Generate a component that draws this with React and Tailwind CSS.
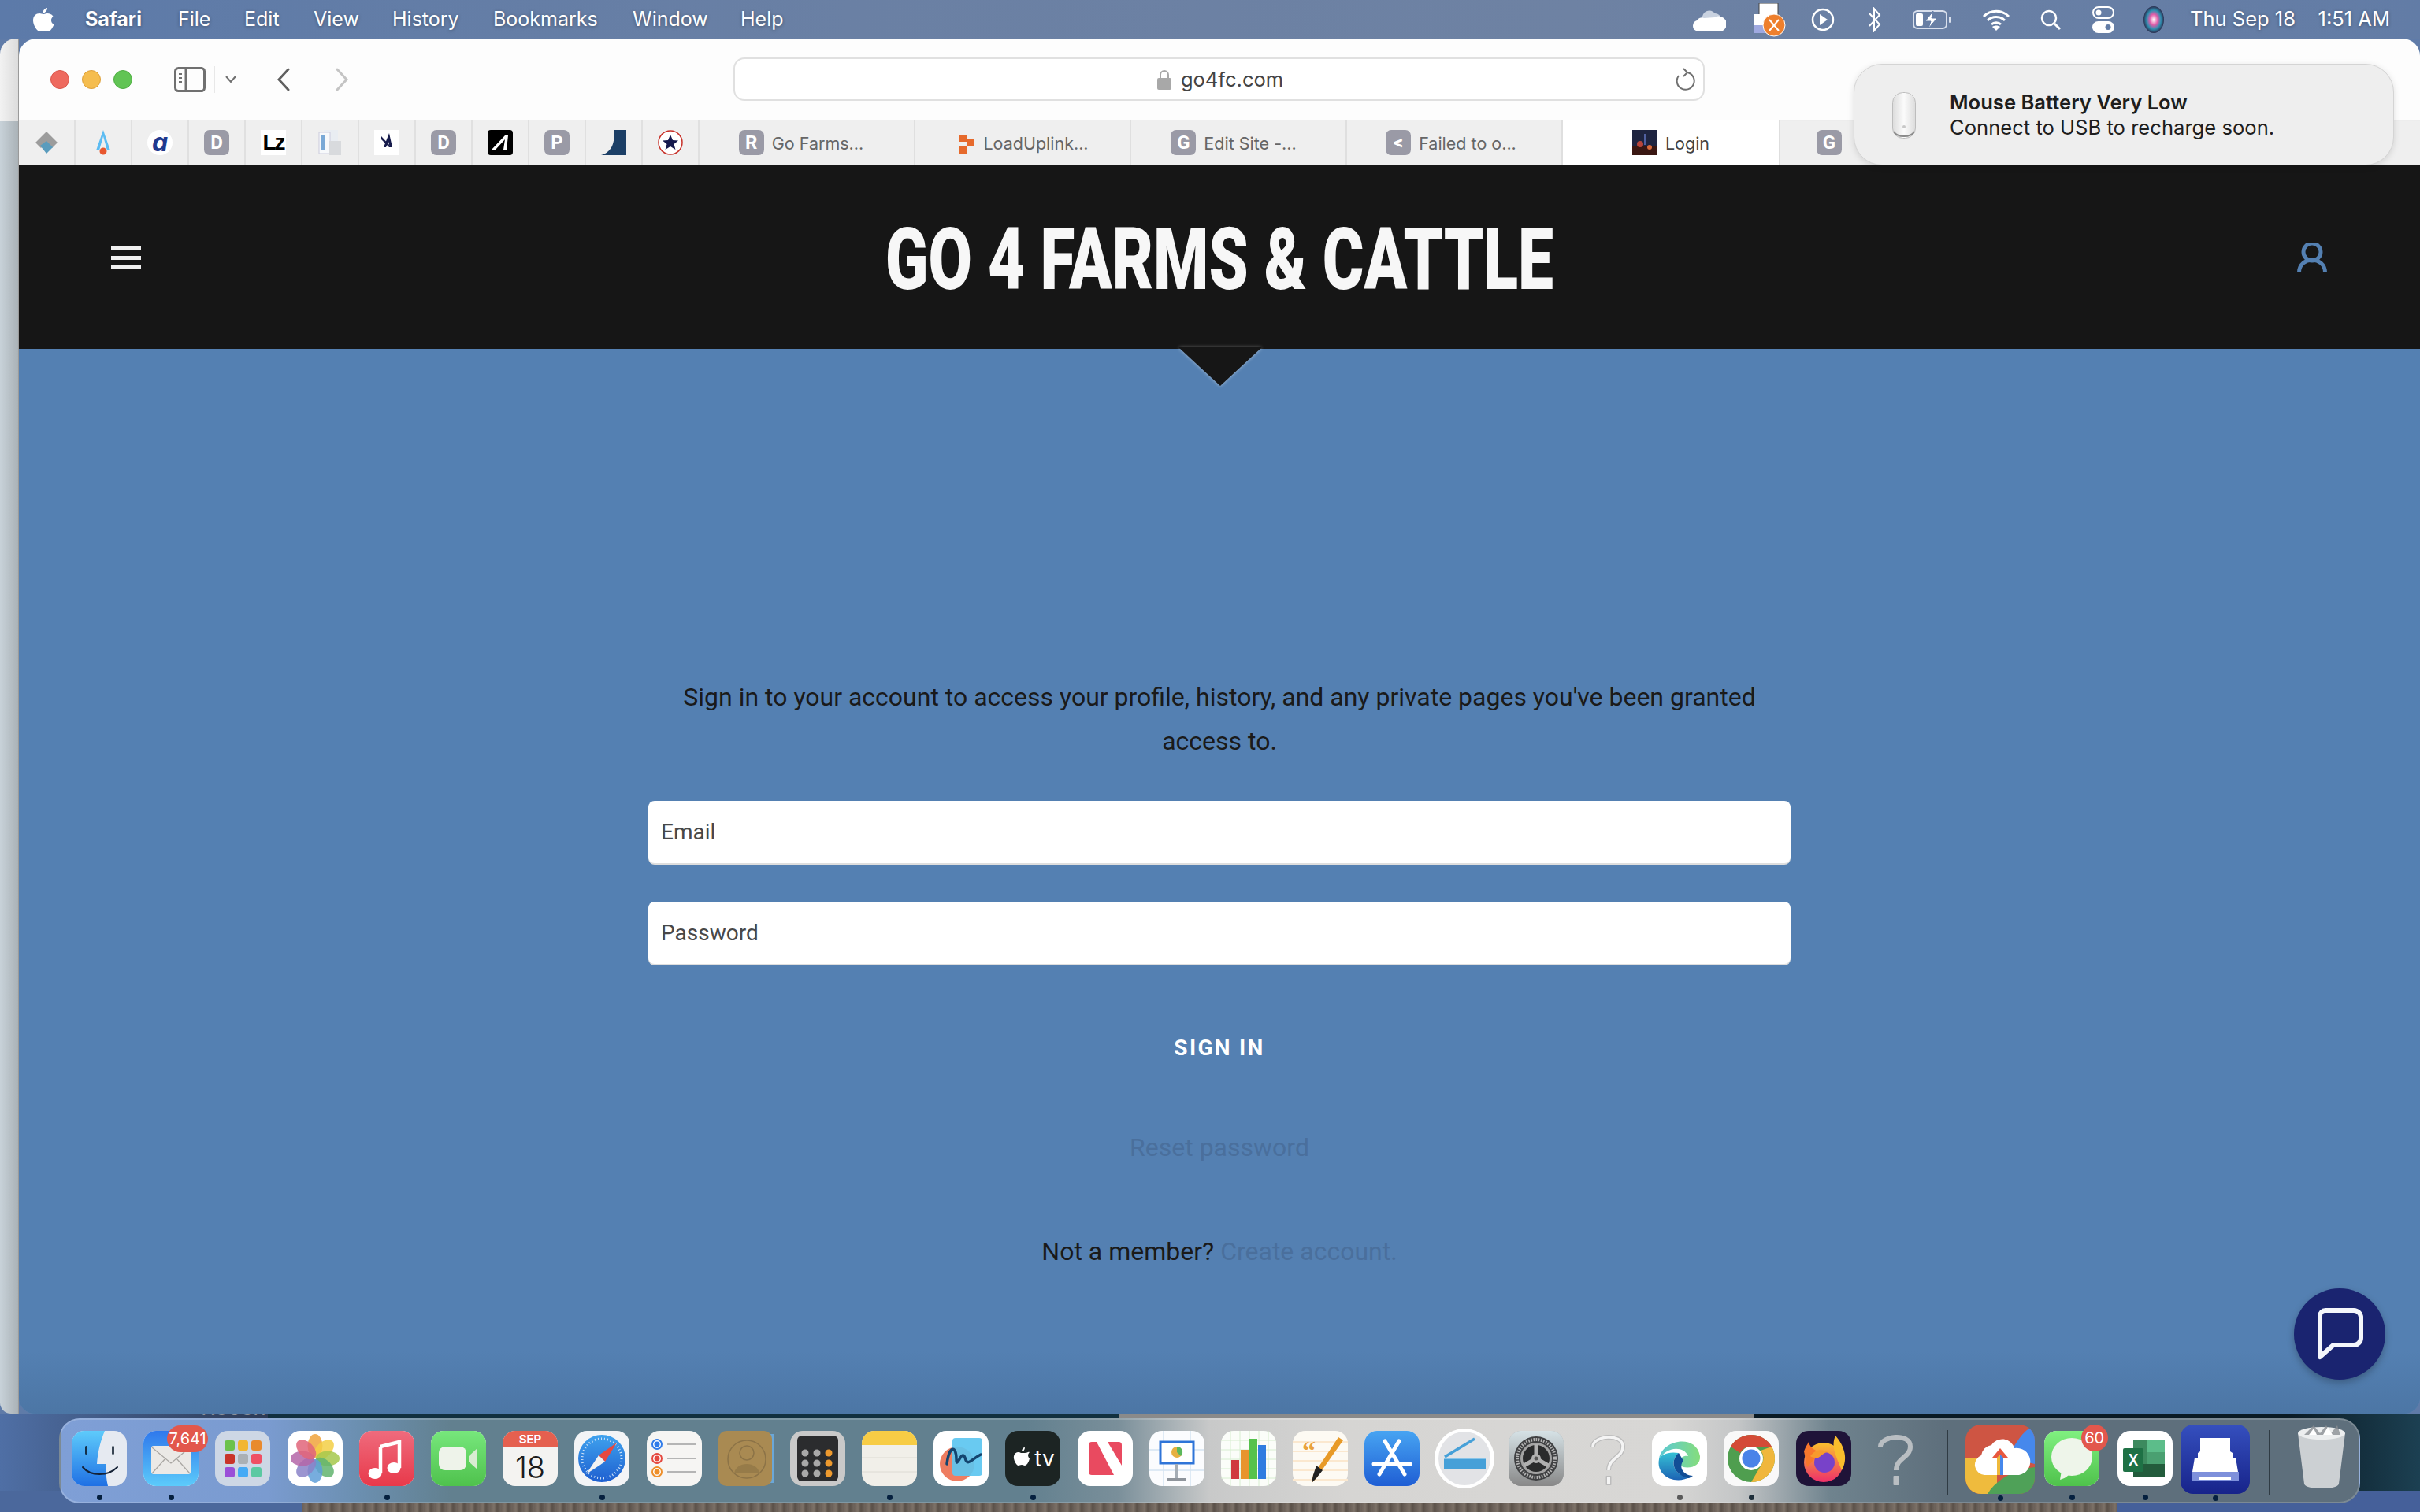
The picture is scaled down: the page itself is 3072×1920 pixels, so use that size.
import React from "react";

const SF = "font-['Inter','Liberation_Sans',sans-serif]";
const RB = "font-['Roboto','Liberation_Sans',sans-serif]";

const Sq = ({ children, fill = "#fff", w = 70, h = 70, rx = 16 }) => (
  <svg width={w} height={h} viewBox={`0 0 ${w} ${h}`} className="block">
    <rect width={w} height={h} rx={rx} fill={fill} />
    {children}
  </svg>
);

const Grad = ({ id, a, b, x2 = 0, y2 = 1 }) => (
  <defs>
    <linearGradient id={id} x1="0" y1="0" x2={x2} y2={y2}>
      <stop offset="0" stopColor={a} />
      <stop offset="1" stopColor={b} />
    </linearGradient>
  </defs>
);

const Finder = () => (
  <Sq fill="#e6eaf1">
    <Grad id="fi" a="#5ecbfb" b="#1f70e4" />
    <path d="M16 0H42C36 14 33 28 32 42H43C43 52 44 62 46 70H16A16 16 0 0 1 0 54V16A16 16 0 0 1 16 0Z" fill="url(#fi)" />
    <rect x="17" y="19" width="3" height="11" rx="1.5" fill="#153049" />
    <rect x="51" y="19" width="3" height="11" rx="1.5" fill="#3a4654" />
    <path d="M14 46C24 58 46 58 58 46" fill="none" stroke="#152236" strokeWidth="2" strokeLinecap="round" />
  </Sq>
);
const Mail = () => (
  <Sq>
    <Grad id="ma" a="#2f78ec" b="#5ccbfb" />
    <rect width="70" height="70" rx="16" fill="url(#ma)" />
    <rect x="10" y="19" width="50" height="36" rx="3" fill="#ebe9e6" />
    <path d="M11 21L35 41L59 21M11 54L28 35M59 54L42 35" fill="none" stroke="#a9a6a2" strokeWidth="1.2" />
  </Sq>
);
const Launch = () => {
  const c = ["#6cc24a", "#f2b632", "#e98a2c", "#c9342a", "#aab0b5", "#ef4f63", "#9a4fd8", "#45aaf5", "#5bc9a2"];
  return (
    <Sq fill="#cdd7e5">
      {c.map((f, i) => (
        <rect key={i} x={12 + (i % 3) * 17} y={12 + Math.floor(i / 3) * 17} width="13" height="13" rx="3" fill={f} />
      ))}
    </Sq>
  );
};
const Photos = () => {
  const c = ["#f0a33c", "#f3cf45", "#a6c84c", "#62b46f", "#5f9fd8", "#8a82c8", "#b466a8", "#e0657a"];
  return (
    <Sq>
      {c.map((f, i) => (
        <ellipse key={i} cx="35" cy="19" rx="9.5" ry="15" fill={f} opacity=".85" transform={`rotate(${i * 45} 35 35)`} />
      ))}
    </Sq>
  );
};
const Music = () => (
  <Sq>
    <Grad id="mu" a="#ef6b7d" b="#e8394a" />
    <rect width="70" height="70" rx="16" fill="url(#mu)" />
    <path d="M27 20L51 14V47" fill="none" stroke="#fff" strokeWidth="4.5" />
    <path d="M27 20V54" fill="none" stroke="#fff" strokeWidth="4.5" />
    <ellipse cx="20" cy="54" rx="8.5" ry="7" fill="#fff" />
    <ellipse cx="44" cy="47" rx="8.5" ry="7" fill="#fff" />
  </Sq>
);
const Facetime = () => (
  <Sq>
    <Grad id="ft" a="#77e77c" b="#4fc24d" />
    <rect width="70" height="70" rx="16" fill="url(#ft)" />
    <rect x="10" y="20" width="35" height="30" rx="8" fill="#eef3ea" />
    <path d="M48 32L59 22V49L48 39Z" fill="#d9ecd2" />
  </Sq>
);
const Calendar = () => (
  <svg width="70" height="70" viewBox="0 0 70 70" className="block">
    <rect width="70" height="70" rx="16" fill="#f4f3f1" />
    <path d="M16 0H54A16 16 0 0 1 70 16V21H0V16A16 16 0 0 1 16 0Z" fill="#e5604f" />
    <text x="35" y="16" textAnchor="middle" fontSize="15" fontWeight="700" fill="#fff" fontFamily="Inter">SEP</text>
    <text x="35" y="60" textAnchor="middle" fontSize="38" fontWeight="300" fill="#1c1c1c" fontFamily="Inter">18</text>
  </svg>
);
const Safari = () => (
  <Sq fill="#f3f4f6">
    <Grad id="sf" a="#3fa2ee" b="#1e5fd0" />
    <circle cx="35" cy="35" r="30" fill="url(#sf)" />
    <circle cx="35" cy="35" r="25" fill="none" stroke="#cfe3f8" strokeWidth="3" strokeDasharray="1 3" />
    <path d="M54 15L31 31L39 39Z" fill="#e8483e" />
    <path d="M15 55L31 31L39 39Z" fill="#f2f2f2" />
  </Sq>
);
const Reminders = () => (
  <Sq fill="#f6f5f3">
    {[["#2f7bea", 17], ["#e4483f", 35], ["#ee8f2a", 52]].map(([c, y]) => (
      <g key={y}>
        <circle cx="13" cy={y} r="6" fill="#fff" stroke={c} strokeWidth="2" />
        <circle cx="13" cy={y} r="3.5" fill={c} />
        <rect x="26" y={y - 1} width="36" height="2" fill="#b5b5b5" />
      </g>
    ))}
  </Sq>
);
const Contacts = () => (
  <svg width="70" height="70" viewBox="0 0 70 70" className="block">
    <rect x="60" y="4" width="10" height="62" fill="#6aa7d8" />
    <rect width="68" height="70" rx="10" fill="#a98a52" />
    <circle cx="36" cy="36" r="24" fill="none" stroke="#8c7347" strokeWidth="1.5" />
    <circle cx="36" cy="28" r="9" fill="none" stroke="#8c7347" strokeWidth="1.5" />
    <path d="M20 54C22 38 50 38 52 54" fill="#967b49" />
  </svg>
);
const Calc = () => (
  <Sq fill="#c9c9c9">
    <rect x="9" y="6" width="52" height="58" rx="6" fill="#2b2c2e" />
    {[0, 1, 2].map((r) =>
      [0, 1, 2].map((c) => (
        <circle key={`${r}${c}`} cx={19 + c * 15} cy={28 + r * 13} r="4.5" fill={c === 2 ? "#ee9a2e" : "#a9a9a9"} />
      ))
    )}
  </Sq>
);
const Notes = () => (
  <svg width="70" height="70" viewBox="0 0 70 70" className="block">
    <rect width="70" height="70" rx="16" fill="#f1efe9" />
    <path d="M16 0H54A16 16 0 0 1 70 16V18H0V16A16 16 0 0 1 16 0Z" fill="#f7cc45" />
    <path d="M0 34H70M0 52H70" stroke="#dcdad3" strokeWidth="1" />
  </svg>
);
const Freeform = () => (
  <Sq>
    <circle cx="30" cy="42" r="22" fill="#ee7d61" />
    <rect x="24" y="9" width="38" height="48" rx="4" fill="#5cc5f0" opacity=".92" />
    <path d="M17 42C20 18 29 18 29 36C29 50 36 22 40 34C43 46 48 36 60 30" fill="none" stroke="#14456f" strokeWidth="3.5" strokeLinecap="round" />
  </Sq>
);
const AppleTv = () => (
  <svg width="70" height="70" viewBox="0 0 70 70" className="block">
    <rect width="70" height="70" rx="16" fill="#1c2423" />
    <path d="M25 26C28 26 29 24 31 25C29 27 28 30 31 33C30 38 27 42 25 42C23 42 23 41 21 41C19 41 18 42 17 42C14 42 10 34 11 30C12 25 17 24 20 26C22 26 23 26 25 26ZM25 19C25 22 23 24 21 24C21 21 23 19 25 19Z" fill="#fff" transform="translate(0 2)" />
    <text x="50" y="45" textAnchor="middle" fontSize="28" fontWeight="400" fill="#fff" fontFamily="Inter">tv</text>
  </svg>
);
const News = () => (
  <Sq>
    <rect x="14" y="14" width="42" height="42" rx="4" fill="#e94a60" />
    <path d="M24 14H38L56 44V56H46Z" fill="#fff" />
  </Sq>
);
const Keynote = () => (
  <Sq fill="#fbfcfe">
    <path d="M0 24H70M0 50H70M18 0V70M52 0V70" stroke="#d5e3f2" strokeWidth="1.5" />
    <rect x="14" y="14" width="42" height="27" fill="#fff" stroke="#2e74d8" strokeWidth="3" />
    <circle cx="35" cy="27" r="7" fill="#e6b040" />
    <path d="M35 27V20A7 7 0 0 1 40 32Z" fill="#5cb85c" />
    <rect x="33" y="42" width="4" height="18" fill="#a5adb5" />
    <rect x="23" y="60" width="24" height="4" fill="#8f959c" />
  </Sq>
);
const Numbers = () => (
  <Sq fill="#fbfdf9">
    <path d="M0 12H70M0 24H70M0 36H70M0 48H70M0 60H70M12 0V70M24 0V70M36 0V70M48 0V70M60 0V70" stroke="#d7eed0" strokeWidth="1" />
    <rect x="13" y="37" width="10" height="24" fill="#d03a3e" />
    <rect x="25" y="24" width="10" height="37" fill="#e8942d" />
    <rect x="36" y="10" width="10" height="51" fill="#56c24d" />
    <rect x="47" y="18" width="10" height="43" fill="#2f7de0" />
  </Sq>
);
const Pages = () => (
  <Sq fill="#fdfaf3">
    <path d="M0 14H70M0 26H70M0 38H70M0 50H70M0 62H70" stroke="#fbe8cf" strokeWidth="2" />
    <text x="12" y="36" fontSize="34" fontWeight="700" fill="#e9a23d" fontFamily="Liberation Serif">“</text>
    <path d="M58 8L64 12L30 60L24 66L26 56Z" fill="#e89a27" />
    <path d="M30 44L38 50L30 60L24 66L26 56Z" fill="#222" />
  </Sq>
);
const AppStore = () => (
  <Sq>
    <Grad id="as" a="#47a4f2" b="#1f5ed4" />
    <rect width="70" height="70" rx="16" fill="url(#as)" />
    <path d="M26 13L51 55M44 13L19 55" stroke="#fff" strokeWidth="5" strokeLinecap="round" />
    <path d="M12 42H58" stroke="#fff" strokeWidth="5" strokeLinecap="round" />
  </Sq>
);
const Capture = () => (
  <svg width="78" height="78" viewBox="0 0 78 78" className="block">
    <ellipse cx="39" cy="39" rx="38" ry="38" fill="#fff" />
    <ellipse cx="39" cy="39" rx="33" ry="34" fill="#e2e3e6" />
    <path d="M14 37L52 14" stroke="#46a0d8" strokeWidth="3.5" />
    <rect x="13" y="38" width="53" height="14" fill="#46a0d8" />
    <rect x="13" y="38" width="53" height="2" fill="#88c4e8" />
  </svg>
);
const Settings = () => (
  <Sq fill="#a5abae">
    <Grad id="st" a="#d6e2e6" b="#888" />
    <rect width="70" height="70" rx="16" fill="url(#st)" />
    <circle cx="35" cy="35" r="28" fill="#3f4042" />
    <circle cx="35" cy="35" r="24" fill="none" stroke="#b4b4b4" strokeWidth="4" strokeDasharray="1.6 1.6" />
    <circle cx="35" cy="35" r="20" fill="#a3a3a3" />
    <circle cx="35" cy="35" r="17" fill="#2a2b2c" />
    <path d="M35 35V17M35 35L19.5 44M35 35L50.5 44" stroke="#b0b0b0" strokeWidth="5" />
    <circle cx="35" cy="35" r="6" fill="#b0b0b0" />
    <circle cx="35" cy="35" r="2.5" fill="#555" />
  </Sq>
);
const Question = ({ color = "#b9bec2", inner }) => (
  <svg width="70" height="70" viewBox="0 0 70 70" className="block">
    <path d="M16 20C16 6 54 2 54 20C54 34 36 34 36 50" fill="none" stroke={color} strokeWidth="6" />
    <rect x="32.5" y="57" width="7" height="12" rx="1" fill={color} />
    {inner && <path d="M16 20C16 6 54 2 54 20C54 34 36 34 36 50" fill="none" stroke={inner} strokeWidth="3.5" />}
    {inner && <rect x="34" y="58.5" width="4" height="9" fill={inner} />}
  </svg>
);
const Edge = () => (
  <Sq>
    <Grad id="ed" a="#36c1d5" b="#1c63b4" />
    <Grad id="eg" a="#5bc9d6" b="#85dd7c" x2={1} y2={0} />
    <path d="M9 38C9 12 56 2 61 32C62 44 50 48 40 46C30 42 36 30 46 32C40 18 16 20 9 38Z" fill="url(#eg)" />
    <path d="M9 36C5 56 28 70 50 58C30 60 20 40 34 28C20 26 12 30 9 36Z" fill="url(#ed)" />
    <path d="M34 28C24 36 24 54 46 60C48 60 50 58 52 57C38 56 34 44 40 38Z" fill="#124e96" />
  </Sq>
);
const Chrome = () => (
  <Sq fill="#f9f9f9">
    <circle cx="35" cy="35" r="30" fill="#4f9e4f" />
    <path d="M35 5A30 30 0 0 1 61 20H35A15 15 0 0 0 21 28L9 20A30 30 0 0 1 35 5Z" fill="#d44b37" />
    <path d="M61 20A30 30 0 0 1 35 65L48 43A15 15 0 0 0 47 25Z" fill="#f0b73c" />
    <circle cx="35" cy="35" r="15" fill="#fff" />
    <circle cx="35" cy="35" r="11.5" fill="#4a83e8" />
  </Sq>
);
const Firefox = () => (
  <Sq fill="#1f1338">
    <Grad id="ff" a="#fbc02d" b="#ee2f6a" />
    <circle cx="35" cy="40" r="25" fill="url(#ff)" />
    <path d="M50 6C62 20 66 36 58 50C50 30 44 20 50 6Z" fill="#f9bd2c" />
    <path d="M10 26C12 20 14 18 16 14C18 24 26 24 30 28L14 46Z" fill="#f8772c" />
    <circle cx="36" cy="40" r="13" fill="#7842c9" />
    <path d="M18 32C24 24 32 22 40 27C34 28 32 32 28 34C24 34 20 34 18 32Z" fill="#f89a2c" />
  </Sq>
);
const GDrive = () => (
  <svg width="88" height="88" viewBox="0 0 88 88" className="block">
    <clipPath id="gd"><rect width="88" height="88" rx="20" /></clipPath>
    <g clipPath="url(#gd)">
      <rect width="88" height="88" fill="#ce5543" />
      <path d="M88 0V50L54 42C62 26 72 8 88 0Z" fill="#4688ec" />
      <path d="M0 42H40V88H0Z" fill="#efbb3d" />
      <path d="M28 88C40 68 66 56 88 54V88Z" fill="#4fa158" />
    </g>
    <path d="M24 64A13 13 0 0 1 20 39A15 15 0 0 1 33 26A16 16 0 0 1 62 30A17 17 0 0 1 68 64Z" fill="#fff" />
    <path d="M44 30L34 42H40V64H48V42H54Z" fill="#e8583f" />
    <path d="M40 42V64H44V38Z" fill="#efb93b" />
    <path d="M48 42V64H44V38Z" fill="#4688ec" />
  </svg>
);
const Messages = () => (
  <Sq>
    <Grad id="ms" a="#80f080" b="#4fc24c" />
    <rect width="70" height="70" rx="16" fill="url(#ms)" />
    <ellipse cx="35" cy="33" rx="26" ry="24" fill="#eef5ea" />
    <path d="M22 50L20 62C26 60 30 58 32 54Z" fill="#eef5ea" />
  </Sq>
);
const Excel = () => (
  <Sq>
    <rect x="20" y="12" width="40" height="46" fill="#3c8a5e" />
    <rect x="38" y="12" width="22" height="15" fill="#5cbd8a" />
    <rect x="38" y="27" width="22" height="15" fill="#4aa071" />
    <rect x="20" y="42" width="40" height="16" fill="#235c3c" />
    <rect x="7" y="22" width="26" height="30" rx="2" fill="#1e7145" />
    <text x="20" y="44" textAnchor="middle" fontSize="20" fontWeight="500" fill="#fff" fontFamily="Roboto">X</text>
  </Sq>
);
const Scanner = () => (
  <svg width="88" height="88" viewBox="0 0 88 88" className="block">
    <Grad id="sc" a="#354fbe" b="#17238a" />
    <rect width="88" height="88" rx="16" fill="url(#sc)" />
    <path d="M25 17H63V42H25Z" fill="#fff" />
    <path d="M18 42H22V36L25 34V42H63V34L66 36V42H70L74 66H14Z" fill="#fff" />
    <path d="M14 60H74V71H14Z" fill="#7e90db" />
    <rect x="24" y="66" width="40" height="4" fill="#fff" />
  </svg>
);
const Trash = () => (
  <svg width="64" height="82" viewBox="0 0 64 82" className="block">
    <path d="M2 12H62L54 76C53 80 45 82 32 82C19 82 11 80 10 76Z" fill="#d6d8da" opacity=".92" />
    <ellipse cx="32" cy="12" rx="30" ry="8" fill="#eceeef" />
    <path d="M10 14L22 2L30 12L38 2L44 12L52 2L56 14Z" fill="#8b8f94" opacity=".8" />
    <path d="M22 6L26 14H16ZM40 4L46 14H34Z" fill="#fff" />
  </svg>
);

const Dot = ({ color = "bg-[#05203f]", className = "-bottom-[18px]" }) => (
  <span className={`absolute left-1/2 -ml-[3px] w-[7px] h-[7px] rounded-full ${color} ${className}`} />
);

const Item = ({ children, dot, color, className = "", dotClass }) => (
  <div className={`relative shrink-0 ${className}`}>
    {children}
    {dot && <Dot color={color} className={dotClass} />}
  </div>
);

const Badge = ({ children, className }) => (
  <span className={`absolute flex items-center justify-center rounded-full bg-[#e2574c] text-white ${SF} text-[20px] leading-none ${className}`}>{children}</span>
);

const Dock = () => (
  <div className="absolute left-[75px] top-[1801px] w-[2921px] h-[108px] rounded-[26px] border-2 border-[#ffffff30] bg-[linear-gradient(to_right,#7f9fd6_0%,#7a9bd0_9%,#6b8fb0_13%,#62808f_17%,#62808f_42%,#7a8f9a_46%,#c8c9c9_50%,#d6d5d3_56%,#d8d7d5_70%,#c4c6c7_73%,#6f838e_77%,#5e6f7c_82%,#5e6f7c_100%)] flex items-start pt-[14px] pl-[14px]">
    <div className="flex items-start gap-[21.2px]">
      <Item dot><Finder /></Item>
      <Item dot>
        <Mail />
        <Badge className="-top-[7px] left-[30px] w-[52px] h-[34px]">7,641</Badge>
      </Item>
      <Item><Launch /></Item>
      <Item><Photos /></Item>
      <Item dot><Music /></Item>
      <Item><Facetime /></Item>
      <Item><Calendar /></Item>
      <Item dot><Safari /></Item>
      <Item><Reminders /></Item>
      <Item><Contacts /></Item>
      <Item><Calc /></Item>
      <Item dot><Notes /></Item>
      <Item><Freeform /></Item>
      <Item dot><AppleTv /></Item>
      <Item><News /></Item>
      <Item><Keynote /></Item>
      <Item><Numbers /></Item>
      <Item><Pages /></Item>
      <Item><AppStore /></Item>
      <Item className="w-[70px] -mt-[4px] flex justify-center"><div className="shrink-0"><Capture /></div></Item>
      <Item><Settings /></Item>
      <Item><Question color="#bdbdbd" inner="#f4f4f4" /></Item>
      <Item dot color="bg-[#5a5a5a]"><Edge /></Item>
      <Item dot color="bg-[#1d2e3a]"><Chrome /></Item>
      <Item><Firefox /></Item>
      <Item><Question /></Item>
    </div>
    <div className="w-[1px] h-[82px] -mt-[1px] ml-[31px] bg-[#2f3b44]" />
    <Item dot className="ml-[22px] -mt-[8px]" dotClass="-bottom-[9px]"><GDrive /></Item>
    <Item dot className="ml-[12px]"><Messages /><Badge className="-top-[8px] left-[47px] w-[34px] h-[34px]">60</Badge></Item>
    <Item dot className="ml-[23px]"><Excel /></Item>
    <Item dot className="ml-[10px] -mt-[8px]" dotClass="-bottom-[9px]"><Scanner /></Item>
    <div className="w-[1px] h-[82px] -mt-[1px] ml-[24px] bg-[#2f3b44]" />
    <Item className="ml-[34px] -mt-[9px]"><Trash /></Item>
  </div>
);

const MenuBar = () => {
  const menus = [["File", "w-[84px]"], ["Edit", "w-[88px]"], ["View", "w-[100px]"], ["History", "w-[128px]"], ["Bookmarks", "w-[177px]"], ["Window", "w-[137px]"], ["Help", ""]];
  return (
    <div className={`h-[49px] shrink-0 flex items-center text-white ${SF} text-[25px] bg-[linear-gradient(to_right,#5c7aa9,#6a80a4_35%,#6e82a3_65%,#627ca6)] [text-shadow:0_1px_4px_rgba(0,0,0,.35)]`}>
      <svg width="28" height="32" viewBox="0 0 28 32" className="ml-[41px] shrink-0" fill="#fff">
        <path d="M19 8C22 8 25 9 26.5 12C23 14 23 20 27.5 22C26 26 23 31 20 31C18 31 17 30 15 30C13 30 12 31 10 31C6 31 1 23 1 17C1 11 5 8 9 8C11 8 13 9 14.5 9C16 9 17 8 19 8ZM19 1C19 4.5 16.5 7.5 13.5 7.5C13.2 4.5 16 1.5 19 1Z" />
      </svg>
      <span className="ml-[39px] w-[118px] font-bold">Safari</span>
      {menus.map(([m, w]) => (
        <span key={m} className={w}>{m}</span>
      ))}
      <div className="ml-auto flex items-center h-full">
        <div className="w-[80px] flex justify-center">
          <svg width="42" height="30" viewBox="0 0 42 30"><path d="M12 14A9 9 0 0 1 28 7A8 8 0 0 1 36 14L20 22Z" fill="#c9d2e0" /><path d="M4 29A7 7 0 0 1 5 16A7 7 0 0 1 14 13L28 12A8 8 0 0 1 38 29Z" fill="#fff" /></svg>
        </div>
        <div className="w-[74px] flex justify-center">
          <svg width="42" height="44" viewBox="0 0 42 44" className="mt-[2px]">
            <rect x="7" y="0" width="24" height="16" fill="#fff" stroke="#444" />
            <rect x="0" y="14" width="30" height="24" fill="#fff" />
            <rect x="0" y="28" width="24" height="10" fill="#9fa9e0" />
            <circle cx="26" cy="28" r="14" fill="#ee7f2c" stroke="#fff" strokeWidth="1" />
            <path d="M20 21L32 35M32 21L20 35" stroke="#fff" strokeWidth="2" />
          </svg>
        </div>
        <div className="w-[60px] flex justify-center">
          <svg width="30" height="30" viewBox="0 0 30 30"><circle cx="15" cy="15" r="13" fill="none" stroke="#fff" strokeWidth="2.5" /><path d="M11 8L21 15L11 22Z" fill="#fff" /></svg>
        </div>
        <div className="w-[72px] flex justify-center">
          <svg width="18" height="32" viewBox="0 0 18 32"><path d="M2 8L15 22L8 30V2L15 10L2 24" fill="none" stroke="#fff" strokeWidth="2" /></svg>
        </div>
        <div className="w-[74px] flex justify-center">
          <svg width="50" height="24" viewBox="0 0 50 24"><rect x="1" y="1" width="42" height="22" rx="5" fill="none" stroke="#d8dfec" strokeWidth="2" /><rect x="46" y="8" width="3" height="8" rx="1" fill="#d8dfec" /><rect x="4" y="4" width="9" height="16" rx="2" fill="#fff" /><path d="M26 1L16 14H23L20 23L31 10H24Z" fill="#fff" stroke="#627ca6" strokeWidth="1" /></svg>
        </div>
        <div className="w-[88px] flex justify-center">
          <svg width="36" height="28" viewBox="0 0 36 28"><path d="M2 10C11 1 25 1 34 10M7 15C13 9 23 9 29 15M12 20C15 17 21 17 24 20" fill="none" stroke="#fff" strokeWidth="3" /><path d="M18 28L13 23C16 21 20 21 23 23Z" fill="#fff" /></svg>
        </div>
        <div className="w-[50px] flex justify-center">
          <svg width="28" height="28" viewBox="0 0 28 28"><circle cx="12" cy="12" r="9" fill="none" stroke="#fff" strokeWidth="2.5" /><path d="M19 19L26 26" stroke="#fff" strokeWidth="3" /></svg>
        </div>
        <div className="w-[84px] flex justify-center">
          <svg width="28" height="34" viewBox="0 0 28 34"><rect x="1" y="1" width="26" height="14" rx="7" fill="none" stroke="#fff" strokeWidth="2" /><circle cx="8" cy="8" r="3.5" fill="#fff" /><rect y="19" width="28" height="15" rx="7.5" fill="#fff" /><circle cx="20" cy="26.5" r="3.5" fill="#627ca6" /></svg>
        </div>
        <div className="w-[44px] flex justify-center">
          <svg width="28" height="36" viewBox="0 0 28 36"><defs><radialGradient id="si"><stop offset="0" stopColor="#fff" /><stop offset=".4" stopColor="#e05ca8" /><stop offset=".7" stopColor="#2d8fb0" /><stop offset="1" stopColor="#2b2f50" /></radialGradient></defs><ellipse cx="14" cy="18" rx="13" ry="17" fill="url(#si)" /></svg>
        </div>
        <div className="w-[316px] shrink-0 pl-[24px] pr-[38px] flex justify-between text-[25.5px]">
          <span>Thu Sep 18</span>
          <span>1:51 AM</span>
        </div>
      </div>
    </div>
  );
};

const Letter = ({ children }) => (
  <span className={`w-[32px] h-[32px] shrink-0 rounded-[7px] bg-[#9a9aa6] text-white text-[24px] font-bold flex items-center justify-center ${RB}`}>{children}</span>
);

const favs = [
  <svg width="32" height="32" viewBox="0 0 32 32"><path d="M16 2L30 16L23 23L16 16L9 23L2 16Z" fill="#9c9c9c" /><path d="M8 20L16 14L24 22L16 30Z" fill="#5a9cbd" /></svg>,
  <svg width="32" height="32" viewBox="0 0 32 32"><path d="M16 0L25 26H21L16 8L11 26H7Z" fill="#5cbcf2" /><circle cx="16" cy="27" r="4.5" fill="#e8572e" /></svg>,
  <span className="w-[32px] h-[32px] rounded-full bg-white text-[#1f3a8f] text-[32px] font-bold italic flex items-center justify-center leading-none font-['Inter',sans-serif]">a</span>,
  <Letter>D</Letter>,
  <span className="w-[32px] h-[32px] bg-white text-black text-[28px] font-bold flex items-center justify-center leading-none font-['Liberation_Sans',sans-serif] tracking-[-2px]">Lz</span>,
  <svg width="32" height="32" viewBox="0 0 32 32"><rect x="8" y="0" width="18" height="24" fill="#e9edf2" /><rect x="2" y="3" width="14" height="27" fill="#f7f9fb" stroke="#ccd" /><rect x="4" y="6" width="6" height="20" fill="#7aa9d6" /><rect x="15" y="14" width="15" height="18" fill="#d8dadd" /></svg>,
  <svg width="32" height="32" viewBox="0 0 32 32"><rect width="32" height="32" fill="#fff" /><path d="M19 4L12 22H15L18 15L20 22H23Z" fill="#171c4c" /><path d="M9 8L22 22H19L9 12Z" fill="#171c4c" /></svg>,
  <Letter>D</Letter>,
  <svg width="32" height="32" viewBox="0 0 32 32"><rect width="32" height="32" rx="4" fill="#000" /><path d="M5 25L22 7H26L24 25H20L22 12L10 25Z" fill="#fff" /></svg>,
  <Letter>P</Letter>,
  <svg width="32" height="32" viewBox="0 0 32 32"><path d="M0 32C14 28 18 16 16 0H32V32Z" fill="#1c3f66" /></svg>,
  <svg width="32" height="32" viewBox="0 0 32 32"><circle cx="16" cy="16" r="15" fill="#fff" stroke="#c8322a" strokeWidth="1.5" /><path d="M16 6L19 13L26 13.5L20.5 18L22.5 25L16 21L9.5 25L11.5 18L6 13.5L13 13Z" fill="#14194d" /></svg>,
];

const Tab = ({ icon, label, active, className = "" }) => (
  <div className={`w-[274px] shrink-0 flex items-center justify-center gap-[10px] text-[21.5px] ${SF} ${active ? "bg-white text-[#444]" : "bg-[#efefef] text-[#666] border-r-2 border-[#dfdfdf]"} ${className}`}>
    {icon}
    <span className="mt-[3px]">{label}</span>
  </div>
);

const TabBar = () => (
  <div className="h-[56px] shrink-0 flex bg-white shadow-[inset_0_1px_2px_rgba(0,0,0,.15)]">
    {favs.map((f, i) => (
      <div key={i} className="w-[72px] shrink-0 flex items-center justify-center bg-[#efefef] border-r-2 border-[#e0e0e0]">{f}</div>
    ))}
    <Tab icon={<Letter>R</Letter>} label="Go Farms..." className="pr-[14px]" />
    <Tab
      icon={<svg width="20" height="32" viewBox="0 0 20 32"><rect x="0" y="6" width="9" height="9" fill="#e66a2c" /><rect x="9" y="12" width="9" height="9" fill="#e66a2c" /><rect x="0" y="21" width="9" height="9" fill="#e66a2c" /></svg>}
      label="LoadUplink..."
      className="pl-[4px]"
    />
    <Tab icon={<Letter>G</Letter>} label="Edit Site -..." className="pr-[12px]" />
    <Tab icon={<Letter>&lt;</Letter>} label="Failed to o..." className="pr-[8px]" />
    <Tab
      active
      icon={<svg width="32" height="32" viewBox="0 0 32 32"><rect width="32" height="32" fill="#1e2440" /><rect y="20" width="32" height="12" fill="#3a1712" /><circle cx="10" cy="18" r="4" fill="#b8453a" /><circle cx="22" cy="22" r="3" fill="#d8693a" /><rect x="15" y="5" width="2" height="14" fill="#5060a0" /></svg>}
      label="Login"
    />
    <div className={`flex-1 flex items-center pl-[48px] gap-[12px] bg-[#efefef] shadow-[inset_1px_0_1px_rgba(0,0,0,.08)] text-[22px] ${SF} text-[#666]`}>
      <Letter>G</Letter>
    </div>
  </div>
);

const Toolbar = () => (
  <div className="h-[104px] shrink-0 relative flex items-center bg-[#fdfdfd]">
    <span className="ml-[40px] w-[24px] h-[24px] rounded-full bg-[#ee6a5f] border border-[#d9564b]" />
    <span className="ml-[16px] w-[24px] h-[24px] rounded-full bg-[#f5bd4f] border border-[#dea03a]" />
    <span className="ml-[16px] w-[24px] h-[24px] rounded-full bg-[#61c454] border border-[#4fae43]" />
    <svg width="40" height="32" viewBox="0 0 40 32" className="ml-[53px]" fill="none" stroke="#707070" strokeWidth="3">
      <rect x="1.5" y="1.5" width="37" height="29" rx="4" />
      <path d="M15 2V30" />
      <path d="M6 9H10M6 14H10M6 19H10" strokeWidth="2" />
    </svg>
    <span className="ml-[11px] w-[1px] h-[34px] bg-[#e8e8e8]" />
    <svg width="16" height="10" viewBox="0 0 16 10" className="ml-[12px]" fill="none" stroke="#707070" strokeWidth="2"><path d="M2 1L8 8L14 1" /></svg>
    <svg width="18" height="30" viewBox="0 0 18 30" className="ml-[50px]" fill="none" stroke="#606060" strokeWidth="3" strokeLinecap="round"><path d="M15 2L3 15L15 28" /></svg>
    <svg width="18" height="30" viewBox="0 0 18 30" className="ml-[56px]" fill="none" stroke="#c4c4c4" strokeWidth="3" strokeLinecap="round"><path d="M3 2L15 15L3 28" /></svg>
    <div className={`absolute left-[907px] top-[24px] w-[1233px] h-[55px] rounded-[14px] border-2 border-[#e0e0e0] bg-white flex items-center justify-center gap-[12px] text-[25.5px] text-[#444] ${SF}`}>
      <svg width="18" height="26" viewBox="0 0 18 26" className="ml-[3px]"><path d="M4 12V7A5 5 0 0 1 14 7V12" fill="none" stroke="#a8a8a8" strokeWidth="2" /><rect y="11" width="18" height="15" rx="2" fill="#a8a8a8" /></svg>
      <span className="mt-[2px]">go4fc.com</span>
      <svg width="28" height="32" viewBox="0 0 28 32" className="absolute right-[10px] top-[10px]" fill="none" stroke="#707070" strokeWidth="2"><path d="M18 7A11 11 0 1 1 7 11" /><path d="M13 2L18 7L13 12" /></svg>
    </div>
  </div>
);

const Field = ({ label, className = "" }) => (
  <div className={`w-[1450px] h-[79px] rounded-[8px] bg-white flex items-center pl-[16px] text-[28px] text-[#484848] shadow-[0_2px_0_#dedede] ${className}`}>{label}</div>
);

const Site = () => (
  <div className={`flex-1 min-h-0 flex flex-col relative ${RB} bg-[linear-gradient(to_bottom,#5480b2_0%,#5480b2_95%,#4c76a5_100%)] rounded-b-[20px]`}>
    <header className="h-[234px] shrink-0 relative bg-[#161616] flex items-center justify-between pl-[117px] pr-[118px]">
      <div className="w-[38px] flex flex-col gap-[7px] mt-[2px]">
        <span className="h-[5px] bg-[#f0f0f0]" />
        <span className="h-[5px] bg-[#f0f0f0]" />
        <span className="h-[5px] bg-[#f0f0f0]" />
      </div>
      <h1 className="text-[#f7f7f7] text-[110px] leading-none font-black whitespace-nowrap scale-x-[0.73] mt-[8px]">GO 4 FARMS &amp; CATTLE</h1>
      <svg width="38" height="38" viewBox="0 0 38 38" fill="none" stroke="#5480b2" strokeWidth="5" className="mt-[2px]">
        <circle cx="19" cy="12" r="11" />
        <path d="M2.5 38C2.5 17 35.5 17 35.5 38" />
      </svg>
      <div className="absolute left-1/2 top-full -ml-[52px] -mt-[2px] drop-shadow-[0_0_2px_rgba(255,255,255,.5)]">
        <div className="w-[106px] h-[49px] bg-[#161616] [clip-path:polygon(0_0,100%_0,50%_100%)]" />
      </div>
    </header>
    <main className="flex flex-col items-center text-[32px] leading-[56px] text-[#1a1a1a]">
      <p className="w-[1450px] mt-[414px] text-center">Sign in to your account to access your profile, history, and any private pages you've been granted access to.</p>
      <Field label="Email" className="mt-[48px]" />
      <Field label="Password" className="mt-[49px]" />
      <div className="mt-[79px] h-[56px] text-[28px] font-bold tracking-[2.3px] text-white">SIGN IN</div>
      <div className="mt-[70px] h-[56px] text-[#4a6f9c]">Reset password</div>
      <div className="mt-[76px] h-[56px]">Not a member? <span className="text-[#4a6f9c]">Create account.</span></div>
    </main>
    <div className="absolute right-[44px] bottom-[43px] w-[116px] h-[116px] rounded-full bg-[#1a2470] flex items-center justify-center shadow-[0_4px_10px_rgba(0,0,0,.25)]">
      <svg width="60" height="66" viewBox="0 0 60 66" fill="none" stroke="#f4f6fb" strokeWidth="6" strokeLinejoin="round">
        <path d="M12 3H48A9 9 0 0 1 57 12V38A9 9 0 0 1 48 47H22L5 62V10A7 7 0 0 1 12 3Z" />
      </svg>
    </div>
  </div>
);

const Notification = () => (
  <div className={`absolute left-[2353px] top-[81px] w-[686px] h-[129px] rounded-[36px] bg-[#eeeeee] border border-[#d4d4d4] shadow-[0_2px_8px_rgba(0,0,0,.12)] flex items-center pl-[48px] ${SF}`}>
    <svg width="30" height="60" viewBox="0 0 30 60" className="mt-[2px]">
      <defs>
        <linearGradient id="mo" x1="0" y1="0" x2="1" y2="0">
          <stop offset="0" stopColor="#dcdcdc" />
          <stop offset=".5" stopColor="#fbfbfb" />
          <stop offset="1" stopColor="#dcdcdc" />
        </linearGradient>
      </defs>
      <rect x=".5" y=".5" width="29" height="58" rx="13" fill="url(#mo)" stroke="#bdbdbd" />
      <path d="M2 50C6 58 24 58 28 50" fill="none" stroke="#8a8a8a" strokeWidth="2" />
      <circle cx="15" cy="44" r="2" fill="#c8c8c8" />
    </svg>
    <div className="ml-[43px] text-[#1e1e1e] text-[25.6px] leading-[32px]">
      <div className="font-semibold">Mouse Battery Very Low</div>
      <div>Connect to USB to recharge soon.</div>
    </div>
  </div>
);

const Wallpaper = () => (
  <div className="flex-1 flex flex-col">
    <div className="h-[98px] flex overflow-hidden">
      <div className="w-[340px] bg-[linear-gradient(to_right,#4f6fa5,#2c3a55)] pl-[255px] text-[#8a8f99] text-[28px] leading-none font-['Inter',sans-serif]"><span className="block -mt-[22px]">Recent</span></div>
      <div className="w-[1080px] bg-[#12303f]" />
      <div className="w-[806px] bg-[#8a8a8a] pl-[90px] text-[#333] text-[25px] leading-none font-['Inter',sans-serif]"><span className="block -mt-[20px]">New Carrier Account</span></div>
      <div className="flex-1 bg-[linear-gradient(to_right,#0a1a24,#0a1a24_80%,#1c4052)]" />
    </div>
    <div className="flex-1 flex">
      <div className="w-[384px] bg-[#4b689c]" />
      <div className="w-[2304px] bg-[repeating-linear-gradient(90deg,#6b6058_0,#7d7268_5px,#5a5048_9px,#6f655d_14px)]" />
      <div className="flex-1 bg-[#45609a]" />
    </div>
  </div>
);

export default function App() {
  return (
    <div className="relative w-[3072px] h-[1920px] overflow-hidden flex flex-col bg-[#5f7ba8]">
      <MenuBar />
      <div className="h-[1746px] shrink-0 flex">
        <div className="w-[24px] shrink-0 flex flex-col rounded-tl-[20px] rounded-bl-[14px] overflow-hidden border-r border-[#9a9a9a]">
          <div className="h-[105px] bg-[linear-gradient(to_right,#f2f2f2,#dcdcdc)]" />
          <div className="flex-1 bg-[linear-gradient(to_right,#c8d2d9,#aab2b7)]" />
        </div>
        <div className="flex-1 min-w-0 flex flex-col rounded-t-[22px] overflow-hidden rounded-b-[20px] bg-[#5480b2]">
          <Toolbar />
          <TabBar />
          <Site />
        </div>
      </div>
      <Wallpaper />
      <Notification />
      <Dock />
    </div>
  );
}
